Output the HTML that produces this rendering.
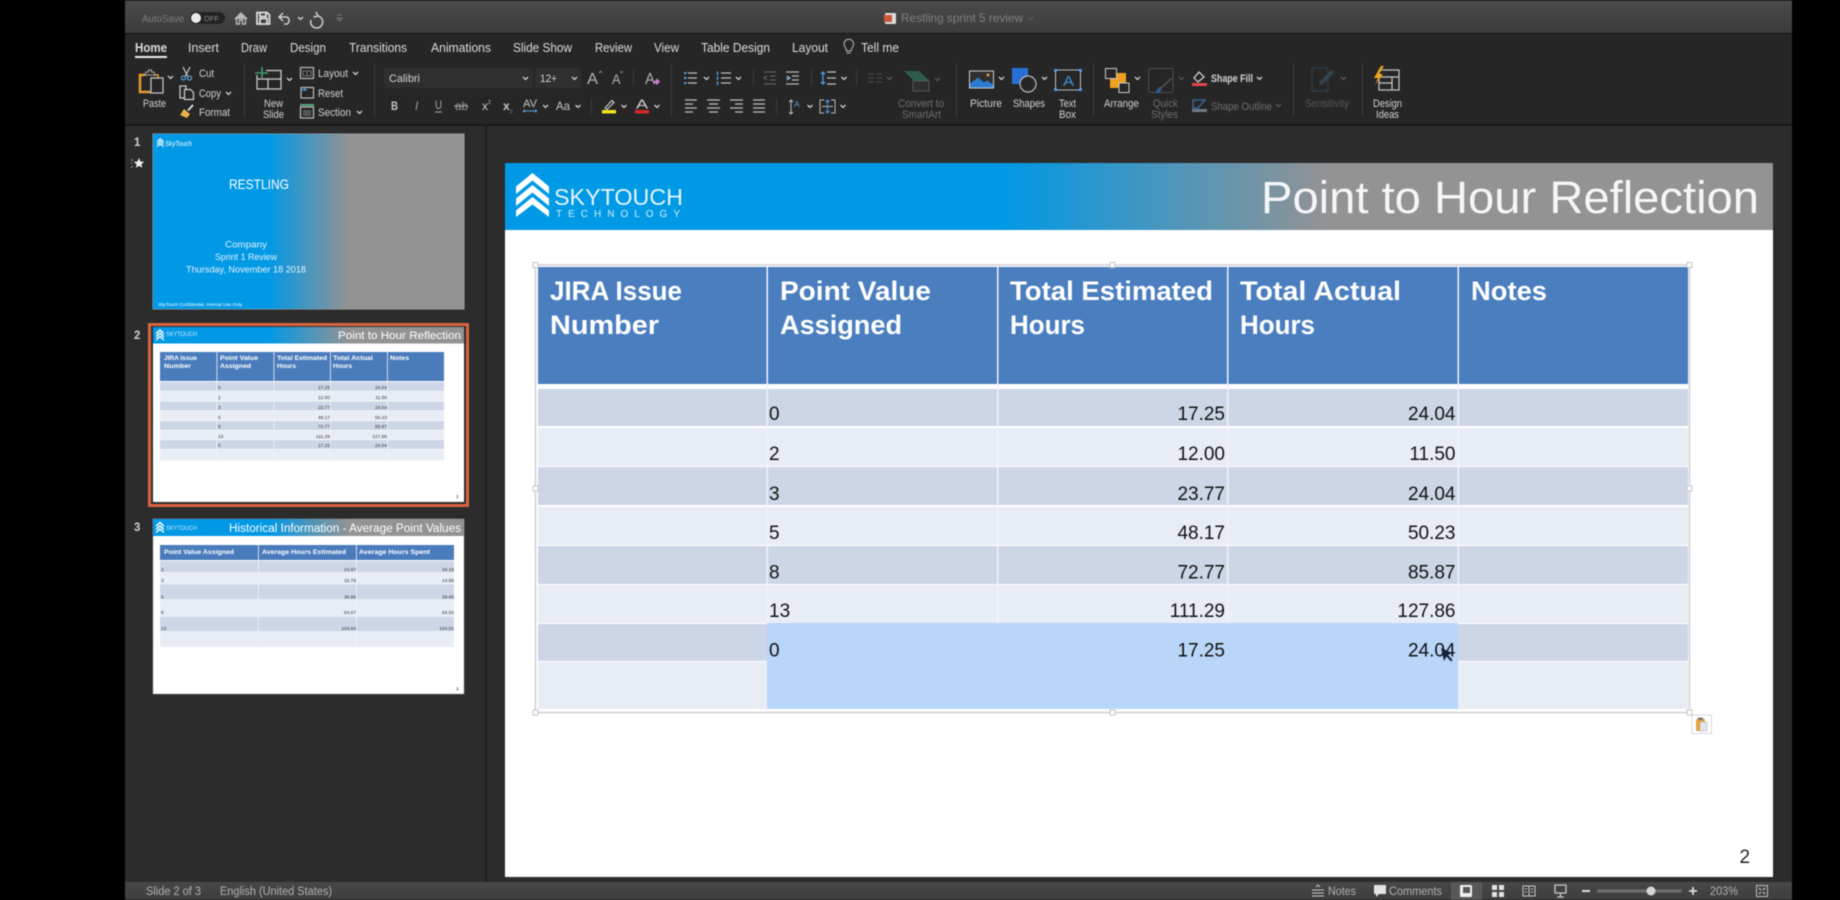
<!DOCTYPE html>
<html><head><meta charset="utf-8"><title>Restling sprint 5 review</title>
<style>
html,body{margin:0;padding:0;background:#000;width:1840px;height:900px;overflow:hidden}
svg{display:block;filter:blur(.5px)}
text{font-family:"Liberation Sans",sans-serif}
.r{fill:#d2d2d2;font-size:11px}
.d{fill:#6d6d6d;font-size:11px}
.t{fill:#dcdcdc;font-size:12.500px}
.h{fill:#fff;font-size:27px;font-weight:bold}
.n{fill:#111;font-size:19px}
.e{text-anchor:end}
.a{fill:none;stroke:#bdbdbd;stroke-width:1.200}
.b{fill:none;stroke:#d0d0d0;stroke-width:1.200}
.x{fill:none;stroke:#5f5f5f;stroke-width:1.200}
.th{fill:#fff;font-size:6.400px;font-weight:bold}
.tn{fill:#333;font-size:4.800px}
</style></head><body>
<svg width="1840" height="900" viewBox="0 0 1840 900" xmlns="http://www.w3.org/2000/svg">
<defs>
<linearGradient id="tb" x1="0" y1="0" x2="0" y2="1"><stop offset="0" stop-color="#4a4a4a"/><stop offset="1" stop-color="#3c3c3c"/></linearGradient>
<linearGradient id="sb" x1="0" y1="0" x2="0" y2="1"><stop offset="0" stop-color="#484848"/><stop offset="1" stop-color="#3d3d3d"/></linearGradient>
<linearGradient id="g1" gradientUnits="userSpaceOnUse" x1="505" y1="0" x2="1773" y2="0"><stop offset=".39" stop-color="#0099e6"/><stop offset=".65" stop-color="#939393"/></linearGradient>
<linearGradient id="g2" gradientUnits="userSpaceOnUse" x1="153" y1="0" x2="464" y2="0"><stop offset=".37" stop-color="#0099e6"/><stop offset=".63" stop-color="#939393"/></linearGradient>
<path id="c" d="M0 0l2.500 2.500L5 0" fill="none" stroke="#cfcfcf" stroke-width="1.300"/>
<path id="cd" d="M0 0l2.500 2.500L5 0" fill="none" stroke="#5f5f5f" stroke-width="1.200"/>
<g id="logo"><path d="M16.500 0L33 13.500V21L16.500 7.500L0 21V13.500Z M16.500 12L33 25.500V33L16.500 19.500L0 33V25.500Z M16.500 24L33 37.500V44L16.500 31.500L0 44V37.500Z" fill="#fff"/></g>
</defs>

<rect width="1840" height="900" fill="#000"/>
<rect x="125" y="0" width="1667" height="900" fill="#2c2c2c"/>
<!-- title bar -->
<rect x="125" y="1" width="1667" height="32" fill="url(#tb)"/>
<rect x="125" y="33" width="1667" height="91" fill="#262626"/>
<rect x="125" y="33" width="1667" height="1" fill="#151515"/>
<rect x="125" y="124" width="1667" height="2" fill="#171717"/>
<text x="142" y="22" fill="#7d7d7d" font-size="10.500" textLength="42" lengthAdjust="spacingAndGlyphs">AutoSave</text>
<rect x="190" y="12" width="35" height="12" rx="6" fill="#222"/><circle cx="196" cy="18" r="5" fill="#ececec"/>
<text x="204" y="21" fill="#8a8a8a" font-size="7" textLength="15" lengthAdjust="spacingAndGlyphs">OFF</text>
<path d="M234 19l7-7 7 7z" fill="#b8b8b8"/><path d="M236.500 19v5h3v-4h3v4h3v-5" fill="none" stroke="#b8b8b8" stroke-width="1.400"/>
<path d="M257 12.500h10l2.500 2.500v9h-12.500zM260 12.500v4h6v-4M260 24v-5.500h7v5.500" fill="none" stroke="#dcdcdc" stroke-width="1.800"/>
<path d="M283 13l-4 4 4 4M279 17h8a4 4 0 0 1 0 7h-3" fill="none" stroke="#cfcfcf" stroke-width="1.500"/>
<use href="#c" x="298" y="17"/>
<path d="M316 12l2 4-4.500 1M317 16a6 6 0 1 1-6 4" fill="none" stroke="#cfcfcf" stroke-width="1.500"/>
<path d="M337 15h5M337 18h5l-2.500 3z" fill="none" stroke="#777" stroke-width="1"/>
<rect x="885" y="13" width="11" height="11" rx="1" fill="#ddd"/><rect x="884" y="15" width="8" height="7" fill="#c8583c"/>
<text x="901" y="22" fill="#7f7f7f" font-size="12" textLength="122" lengthAdjust="spacingAndGlyphs">Restling sprint 5 review</text>
<use href="#cd" x="1028" y="17"/>

<!-- tabs -->
<text class="t" x="135" y="52" textLength="32" lengthAdjust="spacingAndGlyphs" font-weight="bold" fill="#fff">Home</text>
<rect x="135" y="56" width="32" height="2" fill="#eee"/>
<text class="t" x="188" y="52" textLength="31" lengthAdjust="spacingAndGlyphs">Insert</text>
<text class="t" x="241" y="52" textLength="26" lengthAdjust="spacingAndGlyphs">Draw</text>
<text class="t" x="290" y="52" textLength="36" lengthAdjust="spacingAndGlyphs">Design</text>
<text class="t" x="349" y="52" textLength="58" lengthAdjust="spacingAndGlyphs">Transitions</text>
<text class="t" x="431" y="52" textLength="60" lengthAdjust="spacingAndGlyphs">Animations</text>
<text class="t" x="513" y="52" textLength="59" lengthAdjust="spacingAndGlyphs">Slide Show</text>
<text class="t" x="595" y="52" textLength="37" lengthAdjust="spacingAndGlyphs">Review</text>
<text class="t" x="654" y="52" textLength="25" lengthAdjust="spacingAndGlyphs">View</text>
<text class="t" x="701" y="52" textLength="69" lengthAdjust="spacingAndGlyphs">Table Design</text>
<text class="t" x="792" y="52" textLength="36" lengthAdjust="spacingAndGlyphs">Layout</text>
<path d="M846.500 53h4M846.500 51c0-3-2.500-4-2.500-7a4.800 4.800 0 0 1 9.600 0c0 3-2.500 4-2.500 7z" fill="none" stroke="#bbb" stroke-width="1"/>
<text class="t" x="861" y="52" textLength="38" lengthAdjust="spacingAndGlyphs">Tell me</text>

<!-- separators -->
<g fill="#3c3c3c"><rect x="244" y="63" width="1" height="54"/><rect x="374" y="63" width="1" height="54"/><rect x="671" y="63" width="1" height="54"/><rect x="956" y="63" width="1" height="54"/><rect x="1093" y="63" width="1" height="54"/><rect x="1293" y="63" width="1" height="54"/><rect x="1362" y="63" width="1" height="54"/><rect x="633" y="70" width="1" height="16"/><rect x="591" y="98" width="1" height="16"/><rect x="753" y="70" width="1" height="16"/><rect x="811" y="70" width="1" height="16"/><rect x="856" y="70" width="1" height="16"/><rect x="776" y="98" width="1" height="16"/></g>

<!-- paste group -->
<path d="M145 75h-5v17h11" fill="none" stroke="#e8982e" stroke-width="2.500"/><path d="M154 75h4v3" fill="none" stroke="#e8982e" stroke-width="1.500"/><path d="M145 75l1-3h2.500v-2h3v2h2.500l1 3z" fill="none" stroke="#aaa" stroke-width="1"/>
<rect x="151" y="78" width="12" height="15" fill="#262626" stroke="#ccc" stroke-width="1.200"/>
<use href="#c" x="168" y="76"/>
<text class="r" x="143" y="107" textLength="23" lengthAdjust="spacingAndGlyphs">Paste</text>
<path d="M183 67l4.500 9M190 67l-4.500 9" stroke="#ccc" stroke-width="1.200" fill="none"/><circle cx="183.500" cy="78" r="2" fill="none" stroke="#5b9bd5" stroke-width="1.300"/><circle cx="189.500" cy="78" r="2" fill="none" stroke="#5b9bd5" stroke-width="1.300"/>
<text class="r" x="199" y="77" textLength="15" lengthAdjust="spacingAndGlyphs">Cut</text>
<path d="M186 90v-4h-6v12h4" class="b"/><path d="M184.500 89.500h6l3 3v7h-9z" class="b"/>
<text class="r" x="199" y="97" textLength="22" lengthAdjust="spacingAndGlyphs">Copy</text><use href="#c" x="226" y="92"/>
<path d="M193 105l-5 5.500" stroke="#ddd" stroke-width="2"/><path d="M184 109l6 5-3 4-7-3z" fill="#e8b04a"/>
<text class="r" x="199" y="116" textLength="31" lengthAdjust="spacingAndGlyphs">Format</text>

<!-- new slide -->
<path d="M266 70.500h15v18.500h-24v-14M257 79h24M268 79v10" class="b"/><path d="M255 73h13M262 67v11" stroke="#3f9c6b" stroke-width="1.600" fill="none"/>
<use href="#c" x="287" y="78"/>
<text class="r" x="264" y="107" textLength="19" lengthAdjust="spacingAndGlyphs">New</text><text class="r" x="263" y="118" textLength="21" lengthAdjust="spacingAndGlyphs">Slide</text>
<rect x="300.500" y="67.500" width="13" height="11" class="a"/><path d="M303 71h8v5h-8zM307 71v5" fill="none" stroke="#888" stroke-width=".8"/>
<text class="r" x="318" y="77" textLength="30" lengthAdjust="spacingAndGlyphs">Layout</text><use href="#c" x="353" y="72"/>
<rect x="301" y="87.500" width="12.500" height="10.500" class="a"/><path d="M300 90h5M303 88a3 3 0 0 1 3 3" stroke="#4b9be0" stroke-width="1.300" fill="none"/>
<text class="r" x="318" y="97" textLength="25" lengthAdjust="spacingAndGlyphs">Reset</text>
<rect x="300.500" y="107" width="13" height="11" class="a"/><rect x="300" y="104" width="14" height="2" fill="#54a87a"/><rect x="303" y="110" width="8" height="6" fill="#555"/>
<text class="r" x="318" y="116" textLength="33" lengthAdjust="spacingAndGlyphs">Section</text><use href="#c" x="357" y="111"/>

<!-- font -->
<rect x="384" y="68" width="149" height="20" rx="2" fill="#2f2f2f"/><rect x="535" y="68" width="46" height="20" rx="2" fill="#2f2f2f"/>
<text class="r" x="389" y="82" textLength="31" lengthAdjust="spacingAndGlyphs" font-size="11.500">Calibri</text><use href="#c" x="523" y="77"/>
<text class="r" x="540" y="82" textLength="17" lengthAdjust="spacingAndGlyphs">12+</text><use href="#c" x="572" y="77"/>
<text x="587" y="84" fill="#b5b5b5" font-size="16" textLength="11" lengthAdjust="spacingAndGlyphs">A</text><path d="M599 73l1.500-2 1.500 2" stroke="#999" fill="none" stroke-width=".8"/>
<text x="612" y="84" fill="#b5b5b5" font-size="14" textLength="8.500" lengthAdjust="spacingAndGlyphs">A</text><path d="M620 71l1.500 2 1.500-2" stroke="#5b9bd5" fill="none" stroke-width=".8"/>
<text x="645" y="84" fill="#b0b0b0" font-size="16" textLength="10" lengthAdjust="spacingAndGlyphs">A</text><path d="M654 82l3-3.500 3 3-3 3.500z" fill="#c67ad0"/>
<g fill="#c8c8c8" font-size="12">
<text x="391" y="110" font-weight="bold" textLength="7" lengthAdjust="spacingAndGlyphs">B</text><text x="415" y="110" font-style="italic" fill="#999">I</text><text x="435" y="109" textLength="7" lengthAdjust="spacingAndGlyphs" fill="#aaa">U</text>
<text x="455" y="110" textLength="13" lengthAdjust="spacingAndGlyphs" fill="#999">ab</text><text x="482" y="110">x</text><text x="503" y="110" font-weight="bold">x</text>
<text x="523" y="107" textLength="14" lengthAdjust="spacingAndGlyphs" font-size="11">AV</text><text x="556" y="110" textLength="14" lengthAdjust="spacingAndGlyphs">Aa</text>
</g>
<path d="M435 112h7M454 106h14" stroke="#aaa" stroke-width="1"/>
<text x="488" y="104" fill="#cfcfcf" font-size="5">2</text><text x="510" y="113" fill="#5b9bd5" font-size="5">2</text>
<path d="M523 111h14M523 111l2-1.500M523 111l2 1.500M537 111l-2-1.500M537 111l-2 1.500" stroke="#5b9bd5" stroke-width=".9" fill="none"/>
<use href="#c" x="543" y="105"/><use href="#c" x="575.500" y="105"/>
<path d="M605 108l7-7.500 2 2-7 7z" fill="none" stroke="#ddd" stroke-width="1"/><rect x="602" y="110" width="14" height="3.500" fill="#f2e21e"/><use href="#c" x="621.500" y="105"/>
<text x="636" y="108.500" fill="#cfcfcf" font-size="13" textLength="12" lengthAdjust="spacingAndGlyphs">A</text><rect x="635" y="110" width="14" height="3.500" fill="#d8292b"/><use href="#c" x="654.500" y="105"/>

<!-- paragraph -->
<path d="M688 73h9M688 78h9M688 83h9" class="a"/><path d="M684 73h2.500M684 78h2.500M684 83h2.500" stroke="#4b9be0" stroke-width="2"/>
<use href="#c" x="704" y="77"/>
<path d="M721 73h10M721 78h10M721 83h10" class="a"/><path d="M717.500 71.500v3.500M717.500 76.500v3.500M717.500 81.500v3.500" stroke="#4b9be0" stroke-width="1.500"/><use href="#c" x="736" y="77"/>
<path d="M764 72h12M770 76h6M770 80h6M764 84h12M767 76l-3 2 3 2" class="x"/><path d="M786 72h13M792 76h7M792 80h7M786 84h13M787 76l3 2-3 2" fill="none" stroke="#b8b8b8" stroke-width="1.200"/><path d="M786 78h5" stroke="#4b9be0" stroke-width="1.200"/>
<path d="M827 72h9M827 78h9M827 84h9" class="a"/><path d="M823 72v12M821 74l2-2 2 2M821 82l2 2 2-2" stroke="#4b9be0" fill="none" stroke-width="1.300"/><use href="#c" x="841.500" y="77"/>
<path d="M868 74h6M876 74h6M868 78h6M876 78h6M868 82h6M876 82h6" stroke="#4a4a4a" stroke-width="1"/><use href="#cd" x="887" y="77"/>
<path d="M904 71h15l10 9-7 9h-9l5-7-5-2z" fill="#2f5c4b"/><rect x="913" y="81" width="16" height="10" fill="#2f2f2f" stroke="#555"/><use href="#cd" x="935" y="78"/>
<text class="d" x="898" y="107" textLength="46" lengthAdjust="spacingAndGlyphs">Convert to</text><text class="d" x="902" y="118" textLength="39" lengthAdjust="spacingAndGlyphs">SmartArt</text>
<path d="M685 100h12M685 104h8M685 108h12M685 112h8" class="a"/><path d="M707 100h13M709 104h9M707 108h13M709 112h9" class="a"/><path d="M730 100h13M735 104h8M730 108h13M735 112h8" class="a"/><path d="M753 100h12M753 104h12M753 108h12M753 112h12" class="a"/>
<path d="M791 100v14M789 102l2-2 2 2M789 112l2 2 2-2" fill="none" stroke="#bbb" stroke-width="1"/><text x="794" y="107" fill="#5b9bd5" font-size="8.500">A</text><use href="#c" x="807.500" y="105"/>
<path d="M824 100h-4v13h4M831 100h4v13h-4M822 106.500h11" fill="none" stroke="#bbb" stroke-width="1"/><path d="M827.500 100v13M825.500 102l2-2 2 2M825.500 111l2 2 2-2" fill="none" stroke="#4b9be0" stroke-width="1"/><use href="#c" x="840.500" y="105"/>

<!-- picture etc -->
<rect x="969.500" y="71" width="24" height="17" fill="#2f2f2f" stroke="#cfcfcf" stroke-width="1"/><path d="M970 87.500v-4l8-6 6 5 3-2 6 4v3z" fill="#2a7bd1"/><circle cx="988" cy="75" r="1.500" fill="#e8982e"/><use href="#c" x="999" y="77"/>
<text class="r" x="970" y="107" textLength="32" lengthAdjust="spacingAndGlyphs">Picture</text>
<rect x="1012" y="68" width="16" height="16" fill="#2a6fd6"/><circle cx="1028" cy="84" r="8" fill="#262626" stroke="#bdbdbd" stroke-width="1.200"/><use href="#c" x="1042" y="77"/>
<text class="r" x="1013" y="107" textLength="32" lengthAdjust="spacingAndGlyphs">Shapes</text>
<rect x="1055.500" y="70" width="25" height="20" fill="none" stroke="#bbb" stroke-width="1"/><g fill="#4b9be0"><rect x="1054" y="69" width="3" height="3"/><rect x="1079" y="69" width="3" height="3"/><rect x="1054" y="88" width="3" height="3"/><rect x="1079" y="88" width="3" height="3"/></g>
<text x="1063" y="86" fill="#3e8fdc" font-size="15" textLength="11" lengthAdjust="spacingAndGlyphs">A</text>
<text class="r" x="1059" y="107" textLength="17" lengthAdjust="spacingAndGlyphs">Text</text><text class="r" x="1059" y="118" textLength="17" lengthAdjust="spacingAndGlyphs">Box</text>
<rect x="1110" y="73" width="16" height="15" fill="#f0a020"/><rect x="1105.500" y="68.500" width="11" height="10" fill="#262626" stroke="#ccc"/><rect x="1119" y="83" width="10" height="9.500" fill="#262626" stroke="#ccc"/><use href="#c" x="1135" y="77"/>
<text class="r" x="1104" y="107" textLength="35" lengthAdjust="spacingAndGlyphs">Arrange</text>
<rect x="1148.500" y="68.500" width="24.500" height="24" rx="2" fill="none" stroke="#4e4e4e"/><path d="M1172 78l-12 11" stroke="#555" stroke-width="1.500"/><path d="M1155 93l4-6 3 2-3 4z" fill="#2f5f96"/><use href="#cd" x="1179" y="77"/>
<text class="d" x="1153" y="107" textLength="25" lengthAdjust="spacingAndGlyphs">Quick</text><text class="d" x="1151" y="118" textLength="27" lengthAdjust="spacingAndGlyphs">Styles</text>
<path d="M1199 72l-5 6 4 4 6-5z" fill="none" stroke="#ddd" stroke-width="1.200"/><rect x="1192" y="83" width="15" height="3" fill="#e0484a"/><use href="#c" x="1257" y="77"/>
<text class="r" x="1211" y="82" textLength="42" lengthAdjust="spacingAndGlyphs" style="font-weight:bold" fill="#ddd">Shape Fill</text>
<path d="M1193 100h12l-7 8h-5z" fill="none" stroke="#3f6c9c" stroke-width="1.300"/><rect x="1192" y="109" width="15" height="3" fill="#70788c"/><use href="#cd" x="1276" y="104"/>
<text class="d" x="1211" y="110" textLength="61" lengthAdjust="spacingAndGlyphs">Shape Outline</text>
<rect x="1312" y="68" width="16" height="23" rx="1" fill="none" stroke="#2f3f4d" stroke-width="1.300"/><path d="M1320 84l13-13" stroke="#34444f" stroke-width="4"/><use href="#cd" x="1341" y="77"/>
<text class="d" x="1305" y="107" textLength="44" lengthAdjust="spacingAndGlyphs" style="fill:#575757">Sensitivity</text>
<rect x="1379" y="70" width="20" height="20" fill="none" stroke="#c8c8c8" stroke-width="1.200"/><path d="M1379 77h20M1392 77v13M1379 83h13" fill="none" stroke="#c8c8c8" stroke-width="1.200"/><path d="M1381 66l-7 12h4l-3 7 8-11h-4l5-8z" fill="#f0a91e"/>
<text class="r" x="1373" y="107" textLength="29" lengthAdjust="spacingAndGlyphs">Design</text><text class="r" x="1376" y="118" textLength="23" lengthAdjust="spacingAndGlyphs">Ideas</text>

<!-- panel -->
<rect x="485" y="126" width="2" height="756" fill="#1c1c1c"/>
<text x="134" y="146" fill="#d0d0d0" font-size="11.500" font-weight="bold">1</text>
<text x="134" y="339" fill="#d0d0d0" font-size="11.500" font-weight="bold">2</text>
<text x="134" y="531" fill="#d0d0d0" font-size="11.500" font-weight="bold">3</text>
<path d="M139 158l1.500 3.500 3.700.3-2.800 2.400.9 3.600-3.300-1.900-3.300 1.900.9-3.600-2.800-2.400 3.700-.3z" fill="#eee"/><path d="M131 160h2M131 163h1M131 167h2" stroke="#aaa" stroke-width="1"/>

<!-- thumb 1 -->
<rect x="152.500" y="133.500" width="312" height="176" fill="#aaa"/>
<rect x="153" y="134" width="311" height="175" fill="url(#g2)"/>
<use href="#logo" transform="translate(157 138) scale(.2 .21)"/>
<text x="165" y="146" fill="#fff" font-size="7.500" textLength="27" lengthAdjust="spacingAndGlyphs">SkyTouch</text>
<text x="229" y="189" fill="#fff" font-size="13.500" textLength="60" lengthAdjust="spacingAndGlyphs">RESTLING</text>
<g fill="#e4f1fa"><text x="225" y="247.500" font-size="9.500" textLength="42" lengthAdjust="spacingAndGlyphs">Company</text><text x="215" y="260" font-size="9.500" textLength="62" lengthAdjust="spacingAndGlyphs">Sprint 1 Review</text><text x="186" y="272.500" font-size="9.500" textLength="120" lengthAdjust="spacingAndGlyphs">Thursday, November 18 2018</text></g>
<text x="158" y="306" fill="#fff" font-size="4.800" textLength="85" lengthAdjust="spacingAndGlyphs">SkyTouch Confidential, Internal Use Only.</text>

<!-- thumb 2 -->
<rect x="149.500" y="324.500" width="318" height="181" fill="none" stroke="#d9643f" stroke-width="3"/>
<rect x="153" y="327" width="311" height="175" fill="#fff"/>
<rect x="153" y="327" width="311" height="16.500" fill="url(#g2)"/>
<use href="#logo" transform="translate(156 329) scale(.24 .27)"/>
<text x="166" y="336" fill="#cfe6f7" font-size="6" textLength="31" lengthAdjust="spacingAndGlyphs">SKYTOUCH</text>
<text x="338" y="339" fill="#fff" font-size="11" textLength="123" lengthAdjust="spacingAndGlyphs">Point to Hour Reflection</text>
<rect x="160" y="352" width="284" height="29" fill="#4a7cbc"/>
<g fill="#cdd6e7"><rect x="160" y="382" width="284" height="9"/><rect x="160" y="401.500" width="284" height="9"/><rect x="160" y="421" width="284" height="9"/><rect x="160" y="440" width="284" height="9"/></g>
<g fill="#e8edf5"><rect x="160" y="391.500" width="284" height="9.500"/><rect x="160" y="411" width="284" height="9.500"/><rect x="160" y="430.500" width="284" height="9"/><rect x="160" y="449.500" width="284" height="11"/></g>
<g fill="#eef1f7"><rect x="216.500" y="352" width=".8" height="109"/><rect x="273.500" y="352" width=".8" height="109"/><rect x="330" y="352" width=".8" height="109"/><rect x="387" y="352" width=".8" height="109"/></g>
<text class="th" x="164" y="360" textLength="33" lengthAdjust="spacingAndGlyphs">JIRA Issue</text><text class="th" x="164" y="368" textLength="27" lengthAdjust="spacingAndGlyphs">Number</text>
<text class="th" x="220" y="360" textLength="38" lengthAdjust="spacingAndGlyphs">Point Value</text><text class="th" x="220" y="368" textLength="31" lengthAdjust="spacingAndGlyphs">Assigned</text>
<text class="th" x="277" y="360" textLength="50" lengthAdjust="spacingAndGlyphs">Total Estimated</text><text class="th" x="277" y="368" textLength="19" lengthAdjust="spacingAndGlyphs">Hours</text>
<text class="th" x="333" y="360" textLength="40" lengthAdjust="spacingAndGlyphs">Total Actual</text><text class="th" x="333" y="368" textLength="19" lengthAdjust="spacingAndGlyphs">Hours</text>
<text class="th" x="390" y="360" textLength="19" lengthAdjust="spacingAndGlyphs">Notes</text>
<text class="tn" x="218" y="389">0</text><text class="tn e" x="330" y="389">17.25</text><text class="tn e" x="387" y="389">24.04</text>
<text class="tn" x="218" y="399">2</text><text class="tn e" x="330" y="399">12.00</text><text class="tn e" x="387" y="399">11.50</text>
<text class="tn" x="218" y="409">3</text><text class="tn e" x="330" y="409">23.77</text><text class="tn e" x="387" y="409">24.04</text>
<text class="tn" x="218" y="419">5</text><text class="tn e" x="330" y="419">48.17</text><text class="tn e" x="387" y="419">50.23</text>
<text class="tn" x="218" y="428">8</text><text class="tn e" x="330" y="428">72.77</text><text class="tn e" x="387" y="428">85.87</text>
<text class="tn" x="218" y="438">13</text><text class="tn e" x="330" y="438">111.29</text><text class="tn e" x="387" y="438">127.86</text>
<text class="tn" x="218" y="447">0</text><text class="tn e" x="330" y="447">17.25</text><text class="tn e" x="387" y="447">24.04</text>
<text class="tn" x="456" y="498">2</text>

<!-- thumb 3 -->
<rect x="153" y="519" width="311" height="175" fill="#fff" stroke="#999" stroke-width=".6"/>
<rect x="153" y="519" width="311" height="17" fill="url(#g2)"/>
<use href="#logo" transform="translate(156 521.500) scale(.24 .27)"/>
<text x="166" y="530" fill="#cfe6f7" font-size="6" textLength="31" lengthAdjust="spacingAndGlyphs">SKYTOUCH</text>
<text x="229" y="532" fill="#fff" font-size="11.500" textLength="232" lengthAdjust="spacingAndGlyphs">Historical Information - Average Point Values</text>
<rect x="160" y="545" width="294" height="15" fill="#4a7cbc"/>
<g fill="#cdd6e7"><rect x="160" y="561" width="294" height="11"/><rect x="160" y="584.500" width="294" height="14.500"/><rect x="160" y="617" width="294" height="14"/></g>
<g fill="#e8edf5"><rect x="160" y="572" width="294" height="12.500"/><rect x="160" y="599" width="294" height="18"/><rect x="160" y="631" width="294" height="16"/></g>
<g fill="#eef1f7"><rect x="258" y="545" width=".8" height="102"/><rect x="356" y="545" width=".8" height="102"/></g>
<text class="th" x="164" y="554" textLength="70" lengthAdjust="spacingAndGlyphs">Point Value Assigned</text><text class="th" x="262" y="554" textLength="84" lengthAdjust="spacingAndGlyphs">Average Hours Estimated</text><text class="th" x="359" y="554" textLength="71" lengthAdjust="spacingAndGlyphs">Average Hours Spent</text>
<text class="tn" x="161" y="571">2</text><text class="tn e" x="356" y="571">24.67</text><text class="tn e" x="454" y="571">16.15</text>
<text class="tn" x="161" y="582">3</text><text class="tn e" x="356" y="582">15.78</text><text class="tn e" x="454" y="582">14.86</text>
<text class="tn" x="161" y="598.500">5</text><text class="tn e" x="356" y="598.500">36.85</text><text class="tn e" x="454" y="598.500">29.65</text>
<text class="tn" x="161" y="614">8</text><text class="tn e" x="356" y="614">64.67</text><text class="tn e" x="454" y="614">64.02</text>
<text class="tn" x="161" y="630">13</text><text class="tn e" x="356" y="630">104.94</text><text class="tn e" x="454" y="630">104.01</text>
<text class="tn" x="456" y="690.500">3</text>

<!-- slide -->
<rect x="505" y="163" width="1268" height="714" fill="#fff"/>
<rect x="505" y="163" width="1268" height="67" fill="url(#g1)"/>
<use href="#logo" x="516" y="173"/>
<text x="554" y="205" fill="#e6f5fd" font-size="23" textLength="129" lengthAdjust="spacingAndGlyphs">SKYTOUCH</text>
<text x="556" y="217" fill="#d8eefb" font-size="10" textLength="124">TECHNOLOGY</text>
<text x="1261" y="213" fill="#f4f6f7" font-size="45" textLength="498" lengthAdjust="spacingAndGlyphs">Point to Hour Reflection</text>

<!-- table -->
<rect x="538" y="267" width="1150" height="117" fill="#4a7ebf"/>
<g fill="#cdd6e7"><rect x="538" y="389" width="1150" height="37"/><rect x="538" y="467" width="1150" height="38"/><rect x="538" y="546" width="1150" height="38"/><rect x="538" y="624" width="1150" height="37"/></g>
<g fill="#e8edf5"><rect x="538" y="428" width="1150" height="38"/><rect x="538" y="507" width="1150" height="38"/><rect x="538" y="585" width="1150" height="38"/><rect x="538" y="662" width="1150" height="47"/></g>
<rect x="767" y="623" width="691" height="86" fill="#b9d5f8"/>
<g fill="#f0f3f8"><rect x="766.500" y="267" width="1.500" height="356"/><rect x="997" y="267" width="1.500" height="356"/><rect x="1227" y="267" width="1.500" height="356"/><rect x="1457.500" y="267" width="1.500" height="356"/></g>
<g fill="none" stroke="#d0d0d0" stroke-width="1.500"><rect x="535.500" y="265" width="1154" height="447.500"/></g>
<g fill="#fff" stroke="#c4c4c4" stroke-width="1"><rect x="533" y="262.500" width="5" height="5"/><rect x="1110" y="262.500" width="5" height="5"/><rect x="1687" y="262.500" width="5" height="5"/><rect x="533" y="486" width="5" height="5"/><rect x="1687" y="486" width="5" height="5"/><rect x="533" y="710" width="5" height="5"/><rect x="1110" y="710" width="5" height="5"/><rect x="1687" y="710" width="5" height="5"/></g>

<text class="h" x="550" y="300" textLength="132" lengthAdjust="spacingAndGlyphs">JIRA Issue</text><text class="h" x="550" y="334" textLength="109" lengthAdjust="spacingAndGlyphs">Number</text>
<text class="h" x="780" y="300" textLength="151" lengthAdjust="spacingAndGlyphs">Point Value</text><text class="h" x="780" y="334" textLength="122" lengthAdjust="spacingAndGlyphs">Assigned</text>
<text class="h" x="1010" y="300" textLength="203" lengthAdjust="spacingAndGlyphs">Total Estimated</text><text class="h" x="1010" y="334" textLength="75" lengthAdjust="spacingAndGlyphs">Hours</text>
<text class="h" x="1240" y="300" textLength="161" lengthAdjust="spacingAndGlyphs">Total Actual</text><text class="h" x="1240" y="334" textLength="75" lengthAdjust="spacingAndGlyphs">Hours</text>
<text class="h" x="1471" y="300" textLength="76" lengthAdjust="spacingAndGlyphs">Notes</text>

<text class="n" x="769" y="420">0</text><text class="n e" x="1225" y="420">17.25</text><text class="n e" x="1455.500" y="420">24.04</text>
<text class="n" x="769" y="460">2</text><text class="n e" x="1225" y="460">12.00</text><text class="n e" x="1455.500" y="460">11.50</text>
<text class="n" x="769" y="500">3</text><text class="n e" x="1225" y="500">23.77</text><text class="n e" x="1455.500" y="500">24.04</text>
<text class="n" x="769" y="539">5</text><text class="n e" x="1225" y="539">48.17</text><text class="n e" x="1455.500" y="539">50.23</text>
<text class="n" x="769" y="578.500">8</text><text class="n e" x="1225" y="578.500">72.77</text><text class="n e" x="1455.500" y="578.500">85.87</text>
<text class="n" x="769" y="617">13</text><text class="n e" x="1225" y="617">111.29</text><text class="n e" x="1455.500" y="617">127.86</text>
<text class="n" x="769" y="656.500">0</text><text class="n e" x="1225" y="656.500">17.25</text><text class="n e" x="1455.500" y="656.500">24.04</text>
<path d="M1441 648l3 13 2.500-4.500 4.500 5 1.500-1.500-4.500-5 4.500-2z" fill="#15233b"/>

<!-- paste tag -->
<rect x="1692" y="715" width="19.500" height="18.500" rx="1" fill="#fff" stroke="#d8d8d8"/>
<rect x="1696" y="719" width="9" height="12" fill="#e8a23e"/><rect x="1700" y="722" width="7" height="9" fill="#dfe6ee" stroke="#aaa" stroke-width=".5"/><rect x="1698" y="717.500" width="5" height="2.500" fill="#777"/>
<text x="1739.500" y="863" fill="#222" font-size="19">2</text>

<!-- status bar -->
<rect x="125" y="882" width="1667" height="18" fill="url(#sb)"/>
<g fill="#b2b2b2" font-size="11.500">
<text x="146" y="895" textLength="55" lengthAdjust="spacingAndGlyphs">Slide 2 of 3</text>
<text x="220" y="895" textLength="112" lengthAdjust="spacingAndGlyphs">English (United States)</text>
<text x="1328" y="895" textLength="28" lengthAdjust="spacingAndGlyphs">Notes</text>
<text x="1389" y="895" textLength="53" lengthAdjust="spacingAndGlyphs">Comments</text>
<text x="1710" y="895" textLength="28" lengthAdjust="spacingAndGlyphs">203%</text>
</g>
<path d="M1312 890h12M1312 893h12M1312 896h12M1316 887l2-2 2 2" fill="none" stroke="#c8c8c8" stroke-width="1"/>
<path d="M1374 885h12v9h-7l-3 3v-3h-2z" fill="#e4e4e4"/>
<rect x="1451" y="882" width="31" height="18" fill="#585858"/>
<rect x="1460" y="885" width="12" height="12" rx="1" fill="#eee"/><rect x="1463" y="887" width="7" height="6" fill="#555"/>
<g fill="#e2e2e2"><rect x="1492" y="885" width="5" height="5"/><rect x="1499" y="885" width="5" height="5"/><rect x="1492" y="892" width="5" height="5"/><rect x="1499" y="892" width="5" height="5"/></g>
<path d="M1523 886h12v10h-12zM1529 886v10M1525 889h2M1525 892h2M1531 889h2M1531 892h2" fill="none" stroke="#c8c8c8" stroke-width="1"/>
<path d="M1555 885h11v8h-11zM1560.500 893v4M1557 897h7" fill="none" stroke="#c8c8c8" stroke-width="1.300"/>
<rect x="1582" y="890" width="8" height="2" fill="#ddd"/>
<rect x="1597" y="889.500" width="85" height="3" rx="1.500" fill="#6f6f6f"/><circle cx="1651" cy="891" r="4.500" fill="#d6d6d6"/>
<path d="M1689 891h8M1693 887v8" stroke="#ddd" stroke-width="1.800"/>
<rect x="1756.500" y="885.500" width="11" height="11" fill="none" stroke="#bcbcbc"/><path d="M1759 888l2 2M1765 888l-2 2M1759 894l2-2M1765 894l-2-2" stroke="#ddd"/>
</svg>
</body></html>
